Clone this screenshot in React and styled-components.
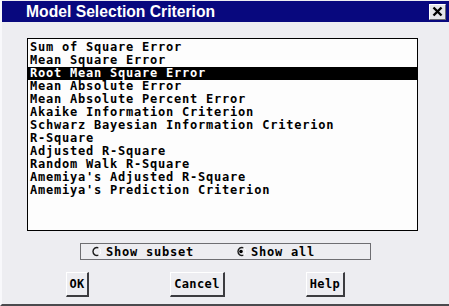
import styled, { createGlobalStyle } from 'styled-components';

const GlobalStyle = createGlobalStyle`
  html, body {
    margin: 0;
    padding: 0;
    background: #ededf1;
  }
`;

const items = [
  'Sum of Square Error',
  'Mean Square Error',
  'Root Mean Square Error',
  'Mean Absolute Error',
  'Mean Absolute Percent Error',
  'Akaike Information Criterion',
  'Schwarz Bayesian Information Criterion',
  'R-Square',
  'Adjusted R-Square',
  'Random Walk R-Square',
  "Amemiya's Adjusted R-Square",
  "Amemiya's Prediction Criterion",
];

const Window = styled.div`
  width: 449px;
  height: 306px;
  box-sizing: border-box;
  background: #ededf1;
  border-left: 2px solid #f8f8fb;
  border-bottom: 2px solid #4a4a4e;
  display: flex;
  flex-direction: column;
  font-family: 'DejaVu Sans Mono', 'Liberation Mono', monospace;
  overflow: hidden;
`;

const TitleBar = styled.div`
  height: 21px;
  margin-top: 1px;
  background: #08087e;
  display: flex;
  align-items: center;
  justify-content: space-between;
  padding: 0 3px 0 24px;
`;

const Title = styled.span`
  color: #ffffff;
  font-family: 'Liberation Sans', Arial, sans-serif;
  font-weight: bold;
  font-size: 15.7px;
`;

const CloseButton = styled.div`
  width: 17px;
  height: 16px;
  box-sizing: border-box;
  background: #e4e4e8;
  border-top: 1px solid #ffffff;
  border-left: 1px solid #ffffff;
  border-right: 1px solid #6a6a70;
  border-bottom: 1px solid #6a6a70;
  display: flex;
  align-items: center;
  justify-content: center;
`;

const Body = styled.div`
  flex: 1;
  display: flex;
  flex-direction: column;
  padding: 16px 0 0 25px;
`;

const ListBox = styled.div`
  width: 391px;
  height: 193px;
  box-sizing: border-box;
  border: 1px solid #000000;
  background: #fdfdfd;
  padding-top: 2px;
  display: flex;
  flex-direction: column;
`;

const monoText = `
  font-size: 12px;
  font-weight: bold;
  letter-spacing: 0.78px;
  white-space: pre;
`;

const Item = styled.div`
  ${monoText}
  height: 13px;
  line-height: 13px;
  padding-left: 2px;
  color: ${({ selected }) => (selected ? '#ffffff' : '#000000')};
  background: ${({ selected }) => (selected ? '#000000' : 'transparent')};
`;

const RadioGroup = styled.div`
  margin: 12px 0 0 53px;
  width: 291px;
  height: 17px;
  box-sizing: border-box;
  border: 1px solid #6e6e72;
  display: flex;
  align-items: center;
  padding-left: 10px;
`;

const RadioOption = styled.label`
  ${monoText}
  display: flex;
  align-items: center;
  gap: 5px;
  width: ${({ w }) => w}px;
  color: #000000;
`;

const ButtonRow = styled.div`
  display: flex;
  gap: 81px;
  margin: 12px 0 0 39px;
`;

const Button = styled.div`
  ${monoText}
  letter-spacing: 0.4px;
  width: ${({ w }) => w}px;
  height: 25px;
  box-sizing: border-box;
  display: flex;
  align-items: center;
  justify-content: center;
  color: #000000;
  background: #ededf1;
  border-top: 1px solid #ffffff;
  border-left: 1px solid #ffffff;
  border-right: 2px solid #3c3c40;
  border-bottom: 2px solid #3c3c40;
`;

function Radio({ checked }) {
  return (
    <svg width="10" height="11" viewBox="0 0 10 11">
      <path d="M7.5 1.8 A4 4 0 1 0 7.5 9.2" fill="none" stroke="#1a1a1a" strokeWidth="1.4" />
      <path d="M7.5 1.8 A4 4 0 0 1 7.5 9.2" fill="none" stroke="#ffffff" strokeWidth="1" />
      {checked && <circle cx="5" cy="5.5" r="1.8" fill="#000000" />}
    </svg>
  );
}

export default function App() {
  return (
    <>
      <GlobalStyle />
      <Window>
        <TitleBar>
          <Title>Model Selection Criterion</Title>
          <CloseButton>
            <svg width="11" height="11" viewBox="0 0 11 11">
              <path d="M1.5 1.5 L9.5 9.5 M9.5 1.5 L1.5 9.5" stroke="#000000" strokeWidth="2.4" />
            </svg>
          </CloseButton>
        </TitleBar>
        <Body>
          <ListBox>
            {items.map((it) => (
              <Item key={it} selected={it === 'Root Mean Square Error'}>
                {it}
              </Item>
            ))}
          </ListBox>
          <RadioGroup>
            <RadioOption w={145}>
              <Radio />
              Show subset
            </RadioOption>
            <RadioOption w={120}>
              <Radio checked />
              Show all
            </RadioOption>
          </RadioGroup>
          <ButtonRow>
            <Button w={23}>OK</Button>
            <Button w={55}>Cancel</Button>
            <Button w={39}>Help</Button>
          </ButtonRow>
        </Body>
      </Window>
    </>
  );
}
